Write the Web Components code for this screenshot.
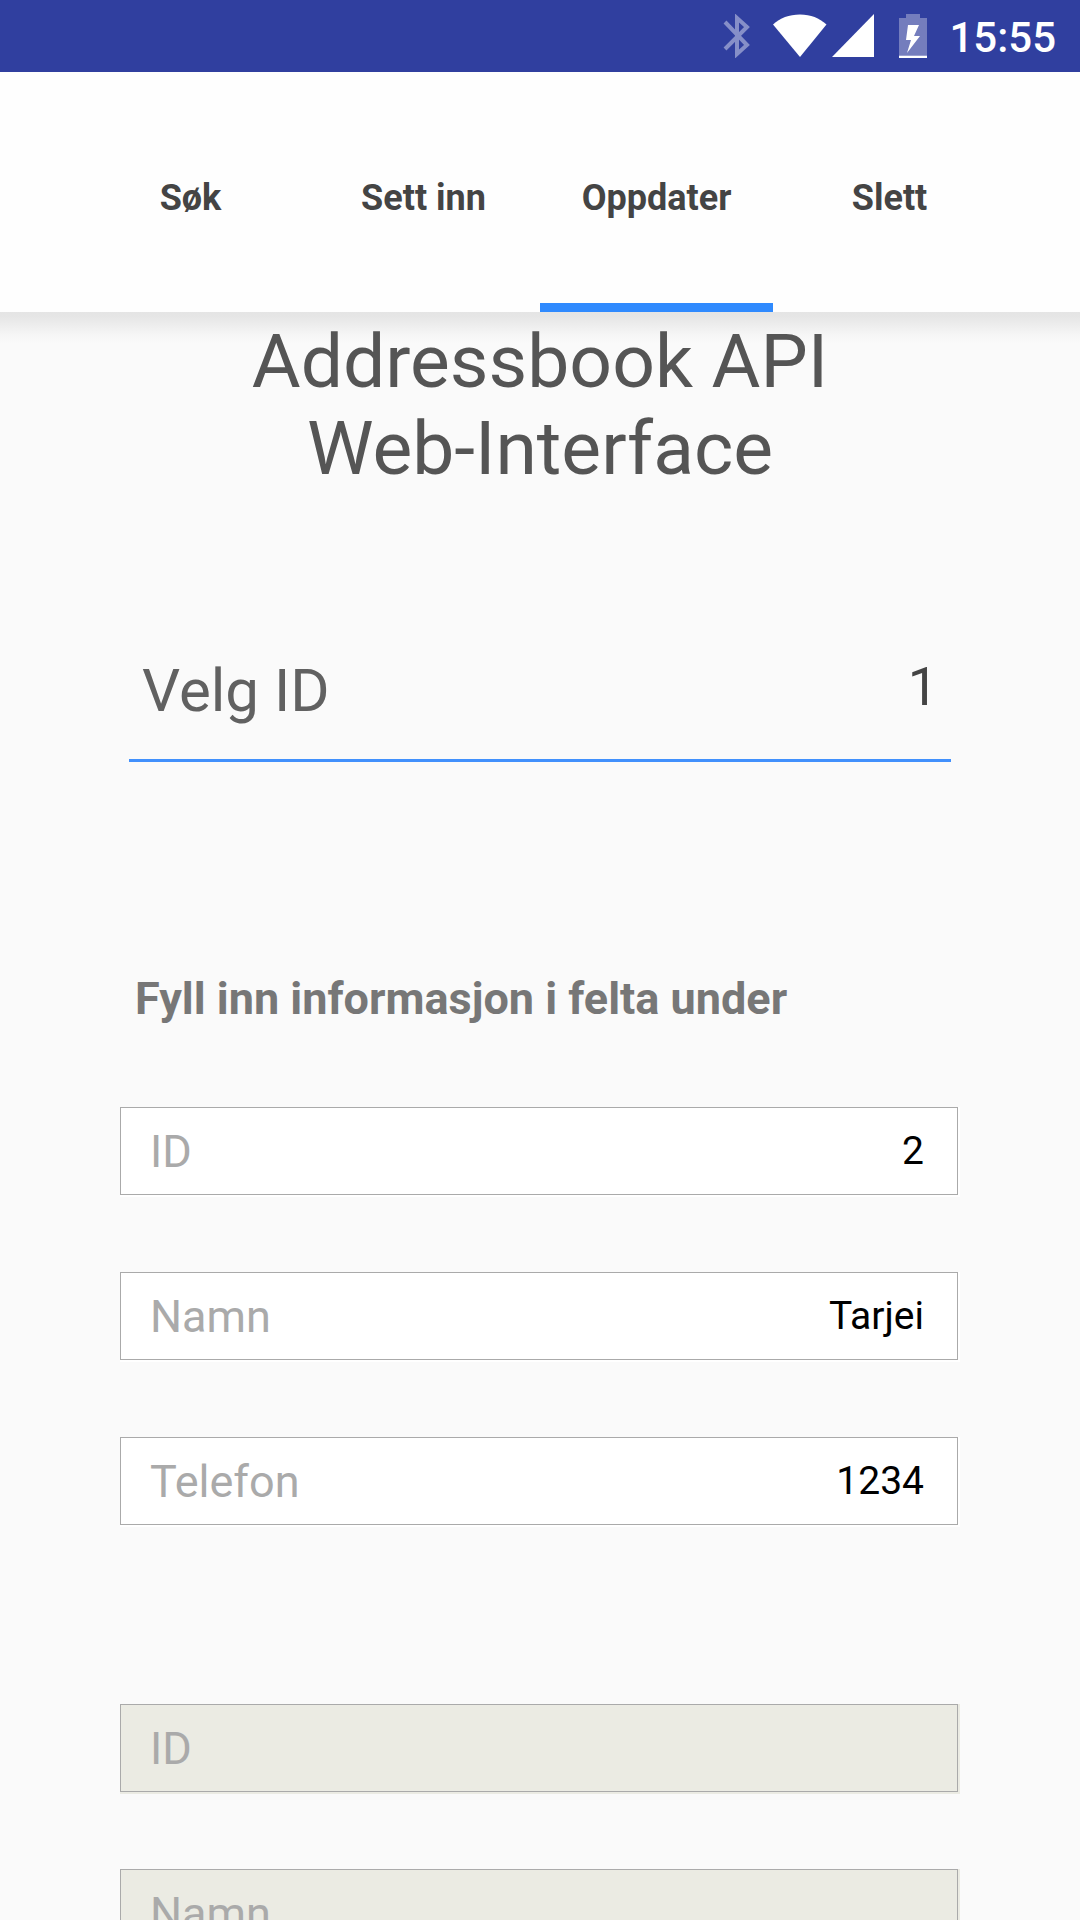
<!DOCTYPE html>
<html lang="nn">
<head>
<meta charset="utf-8">
<meta name="viewport" content="width=device-width, initial-scale=1">
<title>Addressbook API</title>
<style>
  html, body { margin: 0; height: 100%; }
  body { background: #fafafa; font-family: Roboto, sans-serif; }
</style>
</head>
<body>
<address-app>
  <status-bar slot="top" time="15:55"></status-bar>
  <tab-bar slot="top">
    <tab-item>Søk</tab-item>
    <tab-item>Sett inn</tab-item>
    <tab-item selected>Oppdater</tab-item>
    <tab-item>Slett</tab-item>
  </tab-bar>
  <page-title>Addressbook API<br>Web-Interface</page-title>
  <id-picker label="Velg ID" value="1"></id-picker>
  <field-group heading="Fyll inn informasjon i felta under">
    <form-field label="ID" value="2"></form-field>
    <form-field label="Namn" value="Tarjei"></form-field>
    <form-field label="Telefon" value="1234"></form-field>
  </field-group>
  <field-group class="current">
    <form-field label="ID" disabled></form-field>
    <form-field label="Namn" disabled></form-field>
  </field-group>
</address-app>

<script>
  class BaseElement extends HTMLElement {
    connectedCallback() {
      if (!this.shadowRoot) {
        this.attachShadow({ mode: 'open' }).innerHTML = this.render();
      }
    }
    attr(name) { return this.getAttribute(name) || ''; }
  }

  customElements.define('address-app', class extends BaseElement {
    render() {
      return `
        <style>
          :host { display: flex; flex-direction: column; height: 100vh; }
          main {
            flex: 1; min-height: 0; overflow-y: auto; scrollbar-width: none;
            background: linear-gradient(#e4e4e4, #e6e6e6 5px, #f5f5f5 22px, #fafafa 32px);
          }
        </style>
        <slot name="top"></slot>
        <main><slot></slot></main>`;
    }
  });

  customElements.define('status-bar', class extends BaseElement {
    render() {
      return `
        <style>
          :host {
            display: flex; align-items: center; justify-content: flex-end;
            height: 72px; padding: 0 24px; background: #303f9f; color: #fff;
          }
          svg { display: block; fill: currentColor; }
          .wifi { margin-left: 22px; }
          .signal { margin-left: 5px; }
          .battery { margin-left: 25px; }
          time { margin-left: 22px; padding-top: 4px; font-size: 42px; line-height: 50px; font-weight: 500; }
        </style>
        <svg width="28" height="44" viewBox="0 0 28 44" aria-hidden="true">
          <path d="M2 8 24 31 14 40V4L24 13 2 35" fill="none" stroke="#868fc8" stroke-width="4" stroke-linejoin="miter"/>
        </svg>
        <svg class="wifi" width="54" height="44" viewBox="0 0 54 44" aria-hidden="true">
          <path d="M0 10.500C7 4 16 .5 27 .5S46 4 53.500 10.500L27 43Z"/>
        </svg>
        <svg class="signal" width="42" height="44" viewBox="0 0 42 44" aria-hidden="true">
          <path d="M42 0V43H0Z"/>
        </svg>
        <svg class="battery" width="28" height="44" viewBox="0 0 28 44" aria-hidden="true">
          <path fill="#747dbd" d="M7 0H21V4H28V41H0V4H7Z"/>
          <path d="M9 11H20L15 22H21L8 39L12 26H7ZM0 41.500H28V44H0Z"/>
        </svg>
        <time>${this.attr('time')}</time>`;
    }
  });

  customElements.define('tab-bar', class extends BaseElement {
    render() {
      return `
        <style>
          :host { display: block; background: #fefefe; }
          nav { display: flex; height: 240px; padding: 0 74px; }
        </style>
        <nav><slot></slot></nav>`;
    }
  });

  customElements.define('tab-item', class extends BaseElement {
    render() {
      return `
        <style>
          :host { display: flex; flex: 1; }
          button {
            flex: 1; box-sizing: border-box; margin: 0; padding: 20px 0 0;
            border: 0; border-bottom: 9px solid transparent; background: none;
            color: #444; font: bold 36px/42px Roboto, sans-serif;
          }
          :host([selected]) button { border-color: #2f8afe; }
        </style>
        <button type="button"><slot></slot></button>`;
    }
  });

  customElements.define('page-title', class extends BaseElement {
    render() {
      return `
        <style>
          :host { display: block; padding-top: 6px; }
          h1 {
            margin: 0; text-align: center; color: #555;
            font-size: 75px; line-height: 87px; font-weight: 400;
          }
        </style>
        <h1><slot></slot></h1>`;
    }
  });

  customElements.define('id-picker', class extends BaseElement {
    render() {
      return `
        <style>
          :host {
            display: flex; align-items: flex-start;
            margin: 163px 129px 0; padding: 0 13px 32px;
            border-bottom: 3px solid #4190fc;
          }
          label { color: #616161; font-size: 60px; line-height: 72px; }
          input {
            flex: 1; min-width: 0; height: 64px; margin: 0; padding: 0; border: 0;
            outline: 0; background: none; color: #444; text-align: right;
            font: 54px/64px Roboto, sans-serif;
          }
        </style>
        <label for="value">${this.attr('label')}</label>
        <input id="value" type="text" inputmode="numeric" value="${this.attr('value')}">`;
    }
  });

  customElements.define('field-group', class extends BaseElement {
    render() {
      const heading = this.attr('heading');
      return `
        <style>
          :host { display: block; margin: 210px 122px 0 120px; }
          :host(.current) { margin-top: 179px; }
          h2 {
            margin: 0 0 82px; padding-left: 15px; color: #777;
            font-size: 45px; line-height: 53px; font-weight: 700;
          }
          .fields { display: flex; flex-direction: column; gap: 77px; }
        </style>
        ${heading ? `<h2>${heading}</h2>` : ''}
        <div class="fields"><slot></slot></div>`;
    }
  });

  customElements.define('form-field', class extends BaseElement {
    render() {
      const disabled = this.hasAttribute('disabled');
      return `
        <style>
          :host {
            --fill: #fff;
            display: flex; align-items: center; box-sizing: border-box;
            height: 88px; padding: 0 33px 0 29px;
            border: 1px solid #aaa; background: var(--fill);
            box-shadow: 2px 2px 0 var(--fill), 0 2px 0 var(--fill), 2px 0 0 var(--fill);
          }
          :host([disabled]) { --fill: #ebebe3; }
          label { color: #aaa; font-size: 45px; line-height: 53px; }
          input {
            flex: 1; min-width: 0; height: 46px; margin: 0; padding: 0; border: 0;
            outline: 0; background: none; color: #000; text-align: right;
            font: 39px/46px Roboto, sans-serif;
          }
        </style>
        <label for="value">${this.attr('label')}</label>
        <input id="value" type="text" value="${this.attr('value')}"${disabled ? ' disabled' : ''}>`;
    }
  });
</script>
</body>
</html>
